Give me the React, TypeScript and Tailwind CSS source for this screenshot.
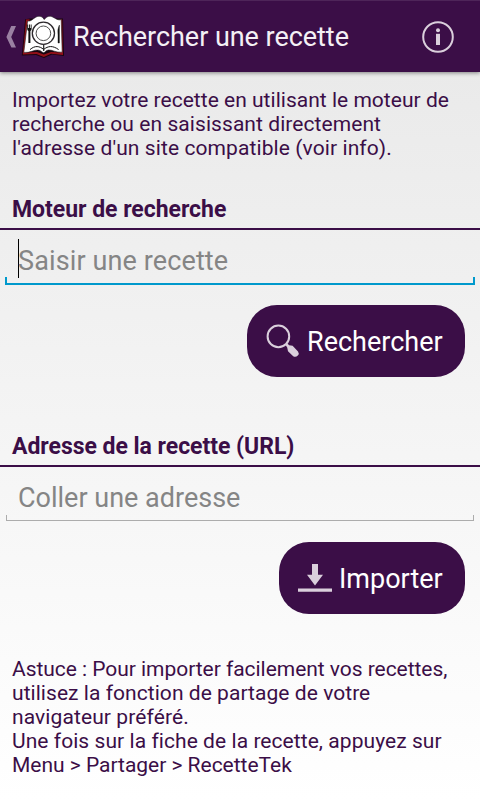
import type { ReactNode } from 'react';

const BackChevron = () => (
  <svg width="10" height="22" viewBox="0 0 10 22" className="shrink-0" aria-hidden="true">
    <path d="M5.2 0H10L5.2 11L10 21.4H5.4L.4 11Z" fill="#9a80a2" />
  </svg>
);

const CookbookLogo = () => (
  <svg width="44" height="44" viewBox="0 0 44 44" className="shrink-0" aria-hidden="true">
    <path d="M4.2 4.2L9 3.4L37 3.6L42 3.4L43 41L31 39.6L23 43L15 40L.8 40.6Z" fill="#170510" />
    <path d="M5 4.6L8.5 4.2V9L5 38L1.8 39ZM39 4.4H41.2L42 39L39 37.5ZM1.8 37.4L16 37L22.8 39.4L30 37L42 37.6V40L30 38.8L22.8 42L15.5 39L1.8 39.6Z" fill="#931019" />
    <path
      d="M6.6 6C10.6 7 13.4 1.4 18 1.2C21 1.2 22.2 3 23.2 4.6C24.8 2.6 26.6 1 29.2 1.2C33.4 2 36 5.8 40.2 4.6L41.2 37.2C35 37.8 31 34.6 27.4 35C24.6 35.4 23.8 37.6 22.7 37.8C21 37.4 20 35.4 17.6 35.2C13 34.2 9 38.4 2.8 37.4Z"
      fill="#fff"
      stroke="#211b20"
      strokeWidth=".6"
    />
    <path d="M9 34.6C14 30.2 18.4 31 22.7 34.4C27 31 31.6 30.2 37.6 34.6" fill="none" stroke="#111" strokeWidth="1" />
    <path d="M22.7 29V36" stroke="#222" strokeWidth="1.2" />
    <circle cx="22.4" cy="18.3" r="11.1" fill="#fff" stroke="#2c282c" strokeWidth="1.3" />
    <circle cx="22.4" cy="18.3" r="7.3" fill="#fff" stroke="#3c3c3c" strokeWidth=".9" />
    <path d="M6.2 9.5V14Q6.2 15.6 7.4 16V28H9.4V16Q10.6 15.6 10.6 14V9.5H9.7V13H8.9V9.5H7.9V13H7.1V9.5Z" fill="#111" />
    <path d="M38.4 10V28H37V20Q36.2 14 38.4 10Z" fill="#111" stroke="#111" strokeWidth=".4" />
  </svg>
);

const InfoIcon = () => (
  <svg width="32" height="32" viewBox="0 0 32 32" aria-hidden="true">
    <circle cx="16" cy="16" r="14.8" fill="none" stroke="#dacfdc" strokeWidth="2" />
    <circle cx="16" cy="9.3" r="2" fill="#dacfdc" />
    <path d="M14 12.8H18V24H14Z" fill="#dacfdc" />
  </svg>
);

const SearchIcon = () => (
  <svg width="34" height="34" viewBox="0 0 34 34" className="shrink-0" aria-hidden="true">
    <circle cx="12.4" cy="12.4" r="10.8" fill="none" stroke="#dacfdc" strokeWidth="2" />
    <path d="M19.2 20.6L20.8 19L23.2 21.2L26.6 21.8L32 27.4Q33.6 29.4 31.8 31.6Q29.6 33.8 27.2 32.2L22 27.2L21.2 23.6Z" fill="#dacfdc" />
  </svg>
);

const DownloadIcon = () => (
  <svg width="34" height="28" viewBox="0 0 34 28" className="shrink-0" aria-hidden="true">
    <path d="M14 0H20V10.8H25L17 21.6L9 10.8H14ZM0 24.6H34V27.8H0Z" fill="#dacfdc" />
  </svg>
);

const SectionTitle = ({ children }: { children: ReactNode }) => (
  <h2 className="h-[34px] whitespace-nowrap border-b-2 border-[#3b0e47] px-3 text-[23px] font-bold leading-[27px] tracking-[-0.03px]">
    {children}
  </h2>
);

export default function App() {
  return (
    <div className="flex h-[800px] w-[480px] flex-col overflow-hidden bg-linear-to-b from-[#e8e8e8] to-white font-[Roboto,sans-serif] text-[#3b0e47]">
      <header className="z-10 flex h-[72px] shrink-0 items-center border-t border-[#4e2559] bg-[#3b0e47] pl-1.5 shadow-[0_1px_4px_rgba(0,0,0,0.45)]">
        <BackChevron />
        <div className="ml-[5px]">
          <CookbookLogo />
        </div>
        <h1 className="ml-2 mt-px whitespace-nowrap text-[27px] leading-8 tracking-[-0.04px] text-[#f4f0f5]">
          Rechercher une recette
        </h1>
        <button type="button" aria-label="Info" className="ml-auto mr-[26px]">
          <InfoIcon />
        </button>
      </header>

      <main className="flex flex-col">
        <p className="mt-4 whitespace-nowrap px-3 text-[21px] leading-6">
          <span className="tracking-[0.02px]">Importez votre recette en utilisant le moteur de</span>
          <br />
          <span className="tracking-[0.07px]">recherche ou en saisissant directement</span>
          <br />
          <span className="tracking-[0.09px]">l'adresse d'un site compatible (voir info).</span>
        </p>

        <section className="mt-9 flex flex-col">
          <SectionTitle>Moteur de recherche</SectionTitle>
          <div className="mx-[5px] mt-[9px] flex h-[46px] flex-col">
            <div className="ml-[13px] flex h-[39px] items-center border-l border-black">
              <span className="-ml-px mt-1 whitespace-nowrap text-[27px] leading-8 tracking-[0.12px] text-[#858585]">
                Saisir une recette
              </span>
            </div>
            <div className="-mt-px h-2 border-2 border-t-0 border-[#0099cc]" />
          </div>
          <button
            type="button"
            className="mr-[15px] mt-5 flex h-[72px] w-[218px] items-center self-end rounded-[30px] bg-[#3b0e47] pl-[19px] text-white"
          >
            <SearchIcon />
            <span className="ml-[7px] mt-0.5 text-[27px] leading-8">Rechercher</span>
          </button>
        </section>

        <section className="mt-14 flex flex-col">
          <SectionTitle>Adresse de la recette (URL)</SectionTitle>
          <div className="mx-1.5 mt-[9px] flex h-[46px] flex-col">
            <span className="ml-3 mt-1 h-[35px] whitespace-nowrap text-[27px] leading-9 text-[#858585]">
              Coller une adresse
            </span>
            <div className="h-[6px] border border-t-0 border-[#acacac]" />
          </div>
          <button
            type="button"
            className="mr-[15px] mt-5 flex h-[72px] w-[186px] items-center self-end rounded-[30px] bg-[#3b0e47] pl-[19px] text-white"
          >
            <DownloadIcon />
            <span className="ml-[7px] mt-0.5 text-[27px] leading-8">Importer</span>
          </button>
        </section>

        <p className="mt-[43px] whitespace-nowrap px-3 text-[21px] leading-6">
          <span className="tracking-[-0.04px]">Astuce : Pour importer facilement vos recettes,</span>
          <br />
          <span className="tracking-[0.05px]">utilisez la fonction de partage de votre</span>
          <br />
          <span className="tracking-[0.1px]">navigateur préféré.</span>
          <br />
          <span className="tracking-[0.06px]">Une fois sur la fiche de la recette, appuyez sur</span>
          <br />
          <span className="tracking-[-0.02px]">Menu &gt; Partager &gt; RecetteTek</span>
        </p>
      </main>
    </div>
  );
}
